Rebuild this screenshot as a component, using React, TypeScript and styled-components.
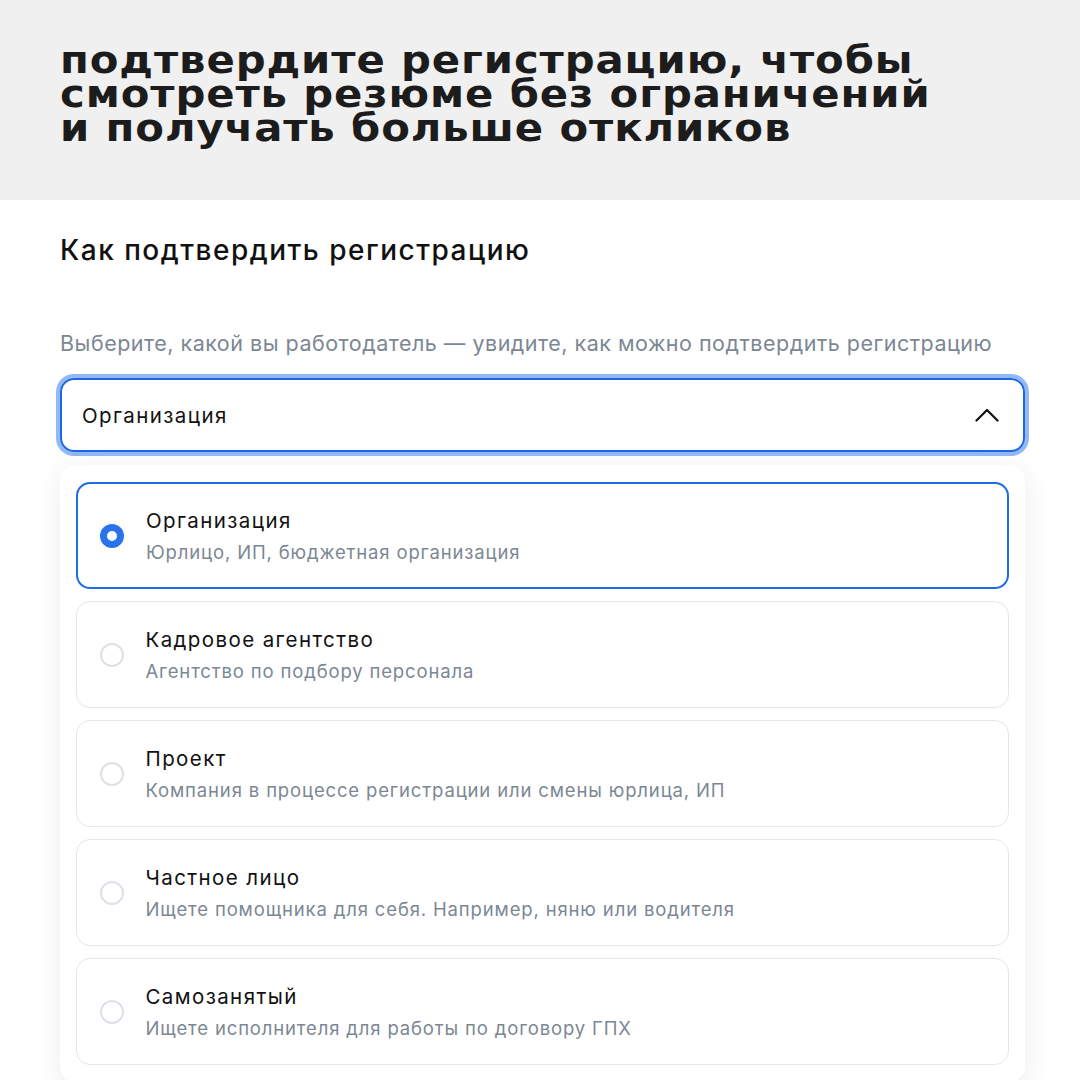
import styled, { createGlobalStyle } from 'styled-components';

const GlobalStyle = createGlobalStyle`
  html, body {
    margin: 0;
    padding: 0;
    background: #ffffff;
  }
  body {
    font-family: Inter, "Noto Sans", sans-serif;
    color: #111111;
  }
`;

const Page = styled.div`
  width: 1080px;
  height: 1080px;
  overflow: hidden;
  background: #ffffff;
  display: flex;
  flex-direction: column;
`;

const Banner = styled.header`
  flex: none;
  height: 200px;
  box-sizing: border-box;
  background: #f0f0f0;
  padding: 43px 60px 0 60px;
`;

// extended display face: widen DejaVu a little to get the same line lengths
const BannerTitle = styled.h1`
  margin: 0;
  font-family: "DejaVu Sans", sans-serif;
  font-weight: 700;
  font-size: 38px;
  line-height: 34px;
  letter-spacing: 0.8px;
  color: #1c1c1c;
  transform: scaleX(1.1);
  transform-origin: left top;
  white-space: nowrap;
`;

const Content = styled.main`
  padding: 33px 55px 0 60px;
  display: flex;
  flex-direction: column;
`;

const SectionTitle = styled.h2`
  margin: 0;
  font-size: 28px;
  font-weight: 500;
  line-height: 34px;
  letter-spacing: 1.5px;
  color: #111111;
`;

const Hint = styled.p`
  margin: 62px 0 0 0;
  font-size: 21.5px;
  line-height: 28px;
  letter-spacing: 0.5px;
  color: #7c8794;
`;

const SelectBox = styled.div`
  margin-top: 21px;
  height: 74px;
  box-sizing: border-box;
  border: 2px solid #1f66e5;
  border-radius: 14px;
  box-shadow: 0 0 0 4px #93b8f7;
  padding: 0 24px 0 20px;
  display: flex;
  align-items: center;
  justify-content: space-between;
  font-size: 20.5px;
  letter-spacing: 1.4px;
  color: #111111;
`;

const Dropdown = styled.div`
  margin-top: 13px;
  background: #ffffff;
  border-radius: 16px;
  box-shadow: 0 6px 28px rgba(40, 50, 110, 0.09);
  padding: 17px 16px;
  display: flex;
  flex-direction: column;
  gap: 12px;
`;

const Option = styled.div<{ $active?: boolean }>`
  height: 107px;
  box-sizing: border-box;
  border: ${(p) => (p.$active ? '2px solid #1f6be8' : '1.5px solid #e4e6eb')};
  border-radius: 14px;
  padding-left: ${(p) => (p.$active ? '22px' : '22.5px')};
  display: flex;
  align-items: center;
  gap: 22px;
`;

const Radio = styled.span<{ $active?: boolean }>`
  flex: none;
  width: 24px;
  height: 24px;
  box-sizing: border-box;
  border-radius: 50%;
  border: ${(p) => (p.$active ? '7.5px solid #2a73eb' : '2px solid #dde1e7')};
  background: #ffffff;
`;

const OptionText = styled.div`
  display: flex;
  flex-direction: column;
  gap: 6px;
`;

const OptionTitle = styled.div`
  font-size: 20.5px;
  line-height: 26px;
  letter-spacing: 1.4px;
  color: #111111;
`;

const OptionSub = styled.div`
  font-size: 18.5px;
  line-height: 24px;
  letter-spacing: 0.85px;
  color: #7c8794;
`;

const options = [
  { title: 'Организация', sub: 'Юрлицо, ИП, бюджетная организация' },
  { title: 'Кадровое агентство', sub: 'Агентство по подбору персонала' },
  { title: 'Проект', sub: 'Компания в процессе регистрации или смены юрлица, ИП' },
  { title: 'Частное лицо', sub: 'Ищете помощника для себя. Например, няню или водителя' },
  { title: 'Самозанятый', sub: 'Ищете исполнителя для работы по договору ГПХ' },
];

const ChevronUp = () => (
  <svg width="24" height="14" viewBox="0 0 24 14" fill="none">
    <path d="M1.5 12.5L12 2L22.5 12.5" stroke="#111" strokeWidth="2.2" strokeLinecap="round" strokeLinejoin="round" />
  </svg>
);

export default function App() {
  return (
    <Page>
      <GlobalStyle />
      <Banner>
        <BannerTitle>
          подтвердите регистрацию, чтобы
          <br />
          смотреть резюме без ограничений
          <br />и получать больше откликов
        </BannerTitle>
      </Banner>
      <Content>
        <SectionTitle>Как подтвердить регистрацию</SectionTitle>
        <Hint>Выберите, какой вы работодатель — увидите, как можно подтвердить регистрацию</Hint>
        <SelectBox>
          <span>Организация</span>
          <ChevronUp />
        </SelectBox>
        <Dropdown>
          {options.map((o, i) => (
            <Option key={o.title} $active={i === 0}>
              <Radio $active={i === 0} />
              <OptionText>
                <OptionTitle>{o.title}</OptionTitle>
                <OptionSub>{o.sub}</OptionSub>
              </OptionText>
            </Option>
          ))}
        </Dropdown>
      </Content>
    </Page>
  );
}
